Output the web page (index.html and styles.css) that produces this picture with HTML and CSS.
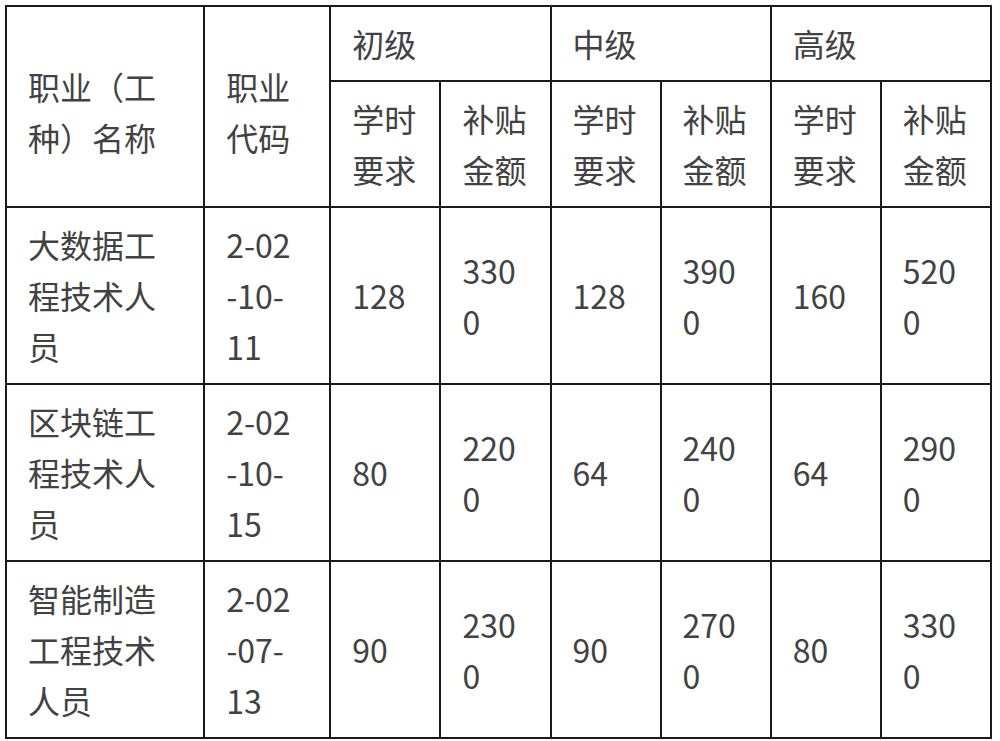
FILE: index.html
```html
<!DOCTYPE html>
<html lang="zh-CN">
<head>
<meta charset="utf-8">
<title>职业补贴表</title>
<link rel="stylesheet" href="styles.css">
</head>
<body>
<table class="subsidy">
  <colgroup>
    <col class="c-name">
    <col class="c-code">
    <col class="c-n">
    <col class="c-n">
    <col class="c-n">
    <col class="c-n">
    <col class="c-n">
    <col class="c-n">
  </colgroup>
  <thead>
    <tr>
      <th rowspan="2" class="span-head">职业（工种）名称</th>
      <th rowspan="2" class="span-head">职业代码</th>
      <th colspan="2">初级</th>
      <th colspan="2">中级</th>
      <th colspan="2">高级</th>
    </tr>
    <tr>
      <th>学时要求</th>
      <th>补贴金额</th>
      <th>学时要求</th>
      <th>补贴金额</th>
      <th>学时要求</th>
      <th>补贴金额</th>
    </tr>
  </thead>
  <tbody>
    <tr>
      <td>大数据工程技术人员</td>
      <td>2-02<br>-10-<br>11</td>
      <td>128</td>
      <td>3300</td>
      <td>128</td>
      <td>3900</td>
      <td>160</td>
      <td>5200</td>
    </tr>
    <tr>
      <td>区块链工程技术人员</td>
      <td>2-02<br>-10-<br>15</td>
      <td>80</td>
      <td>2200</td>
      <td>64</td>
      <td>2400</td>
      <td>64</td>
      <td>2900</td>
    </tr>
    <tr>
      <td>智能制造工程技术人员</td>
      <td>2-02<br>-07-<br>13</td>
      <td>90</td>
      <td>2300</td>
      <td>90</td>
      <td>2700</td>
      <td>80</td>
      <td>3300</td>
    </tr>
  </tbody>
</table>
</body>
</html>
```
FILE: styles.css
```css
html, body {
  margin: 0;
  padding: 0;
  background: #ffffff;
}

body {
  padding: 5px 0 0 5px;
  font-family: "Noto Sans CJK SC", "Microsoft YaHei", sans-serif;
  color: #424242;
}

.subsidy {
  border-collapse: collapse;
  table-layout: fixed;
  width: 987px;
  font-size: 32px;
  line-height: 51px;
}

.c-name { width: 198px; }
.c-code { width: 126px; }
.c-n { width: 110px; }

.subsidy th,
.subsidy td {
  border: 2px solid #1a1a1a;
  padding: 11px 20px 11px 21px;
  text-align: left;
  vertical-align: middle;
  font-weight: normal;
  word-break: break-all;
}

.subsidy th.span-head {
  padding-top: 21px;
}
```
